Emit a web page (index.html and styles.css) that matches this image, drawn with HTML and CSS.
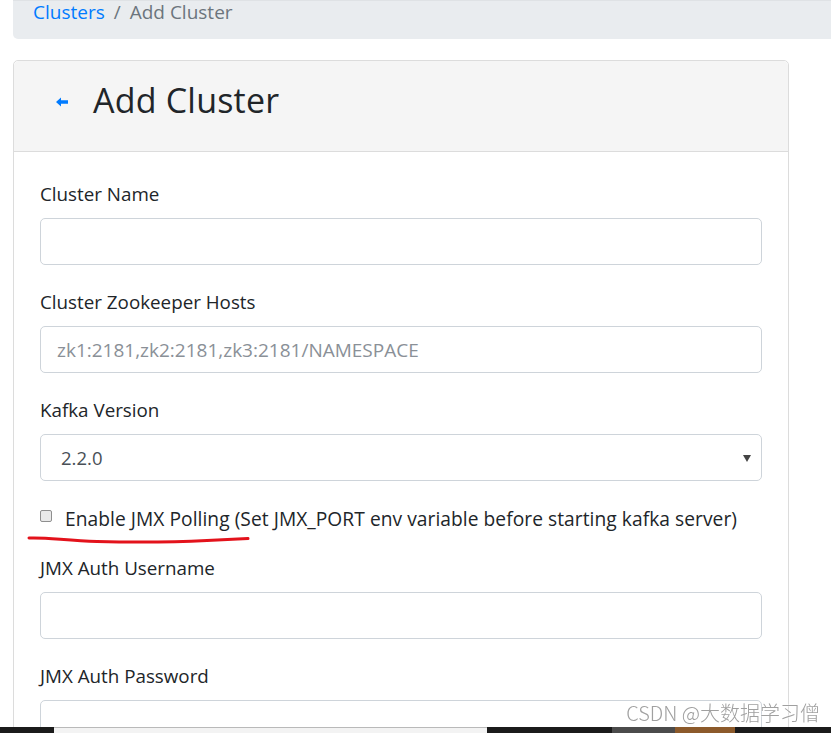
FILE: index.html
```html
<!DOCTYPE html>
<html>
<head>
<meta charset="utf-8">
<link rel="stylesheet" href="styles.css">
</head>
<body>
<nav class="crumbs"><a class="crumb-link">Clusters</a><span class="sep">/</span><span class="crumb-current">Add Cluster</span></nav>
<section class="card">
  <header class="card-head">
    <svg class="back" viewBox="0 0 12 10" width="12" height="10"><path d="M0 5 L5 0.5 L5 3.3 L12 3.3 L12 6.7 L5 6.7 L5 9.5 Z" fill="#007bff"/></svg>
    <h2 class="title">Add Cluster</h2>
  </header>
  <div class="card-body">
    <div class="group">
      <label class="lbl">Cluster Name</label>
      <div class="field"></div>
    </div>
    <div class="group">
      <label class="lbl">Cluster Zookeeper Hosts</label>
      <div class="field"><span class="ph">zk1:2181,zk2:2181,zk3:2181/NAMESPACE</span></div>
    </div>
    <div class="group">
      <label class="lbl">Kafka Version</label>
      <div class="field select"><span class="val">2.2.0</span><svg class="caret" viewBox="0 0 8 7" width="8" height="7"><path d="M0 0 L8 0 L4 7 Z" fill="#444"/></svg></div>
    </div>
    <div class="check-row">
      <span class="box"></span>
      <span class="check-text">Enable JMX Polling (Set JMX_PORT env variable before starting kafka server)</span>
      <svg class="scribble" viewBox="0 0 224 12" width="224" height="12"><path d="M2 4 C 20 3, 40 7, 70 7.5 C 110 8.5, 150 8, 180 6.5 C 200 5.5, 212 5, 221 4.5" stroke="#e3121b" stroke-width="3" fill="none" stroke-linecap="round"/></svg>
    </div>
    <div class="group">
      <label class="lbl">JMX Auth Username</label>
      <div class="field"></div>
    </div>
    <div class="group">
      <label class="lbl">JMX Auth Password</label>
      <div class="field"></div>
    </div>
  </div>
</section>
<div class="taskbar">
  <span class="tb dark w54"></span>
  <span class="tb light w433"></span>
  <span class="tb dark w125"></span>
  <span class="tb grey w63"></span>
  <span class="tb brown w60"></span>
  <span class="tb dark grow"></span>
</div>
<div class="watermark">CSDN @大数据学习僧</div>
</body>
</html>
```
FILE: styles.css
```css
html, body {
  margin: 0;
  padding: 0;
  background: #fff;
  font-family: "Open Sans", "Noto Sans", "Noto Sans CJK SC", sans-serif;
  color: #212529;
  overflow: hidden;
  height: 733px;
}
.crumbs {
  margin-left: 13px;
  height: 39px;
  box-sizing: border-box;
  background: #e9ecef;
  border-top: 1px solid #dfe2e5;
  border-bottom-left-radius: 5px;
  padding-left: 20px;
  padding-top: 1px;
  font-size: 19px;
  line-height: 20px;
  display: flex;
  align-items: flex-start;
}
.crumb-link { color: #007bff; }
.sep { color: #6c757d; padding: 0 9px; }
.crumb-current { color: #6c757d; }
.card {
  margin: 21px 0 0 13px;
  width: 776px;
  box-sizing: border-box;
  border: 1px solid #dcdcdc;
  border-radius: 5px;
  height: 700px;
}
.card-head {
  height: 91px;
  box-sizing: border-box;
  background: #f5f5f5;
  border-bottom: 1px solid #dcdcdc;
  border-radius: 5px 5px 0 0;
  display: flex;
  align-items: center;
  padding-left: 42px;
  padding-bottom: 12px;
}
.back { margin-right: 25px; margin-top: 4px; }
.title {
  margin: 0;
  font-weight: 500;
  font-size: 34px;
  color: #212529;
  letter-spacing: 0.2px;
}
.card-body {
  padding: 30px 26px 0 26px;
  position: relative;
}
.group { margin-bottom: 25px; }
.lbl {
  display: block;
  font-size: 18.8px;
  line-height: 24px;
  margin-bottom: 12px;
  color: #212529;
}
.field {
  height: 47px;
  box-sizing: border-box;
  border: 1px solid #ced4da;
  border-radius: 5px;
  display: flex;
  align-items: center;
  padding-left: 16px;
  font-size: 19px;
}
.ph { color: #8a9097; }
.select { padding-left: 20px; padding-right: 10px; justify-content: space-between; }
.val { color: #495057; font-size: 18.5px; }
.caret { margin-top: 2px; }
.check-row {
  position: relative;
  display: flex;
  align-items: center;
  height: 24px;
  margin: 0 0 26px 0;
}
.box {
  width: 12px;
  height: 12px;
  box-sizing: border-box;
  border: 1px solid #8f8f8f;
  border-radius: 2px;
  background: #e9e9e9;
  margin-right: 13px;
  margin-top: -4px;
}
.check-text { font-size: 19.2px; letter-spacing: 0.05px; color: #212529; white-space: nowrap; }
.scribble {
  position: absolute;
  left: -13px;
  top: 28px;
}
.taskbar {
  position: fixed;
  left: 0;
  right: 0;
  bottom: 0;
  height: 6px;
  display: flex;
}
.tb { display: block; height: 6px; }
.dark { background: #1b1b1b; }
.light { background: #f3f3f3; border-top: 1px solid #b9b9b9; box-sizing: border-box; }
.grey { background: #4b4b4b; }
.brown { background: #8c5a2b; }
.w54 { width: 54px; }
.w433 { width: 433px; }
.w125 { width: 125px; }
.w63 { width: 63px; }
.w60 { width: 60px; }
.grow { flex: 1; }
.watermark {
  position: fixed;
  right: 11px;
  bottom: 6px;
  font-size: 20px;
  font-weight: 300;
  color: #a0a0a0;
  text-shadow: 0 0 2px #fff, 0 0 2px #fff;
  font-family: "Noto Sans CJK SC", "Noto Sans", sans-serif;
}
```
